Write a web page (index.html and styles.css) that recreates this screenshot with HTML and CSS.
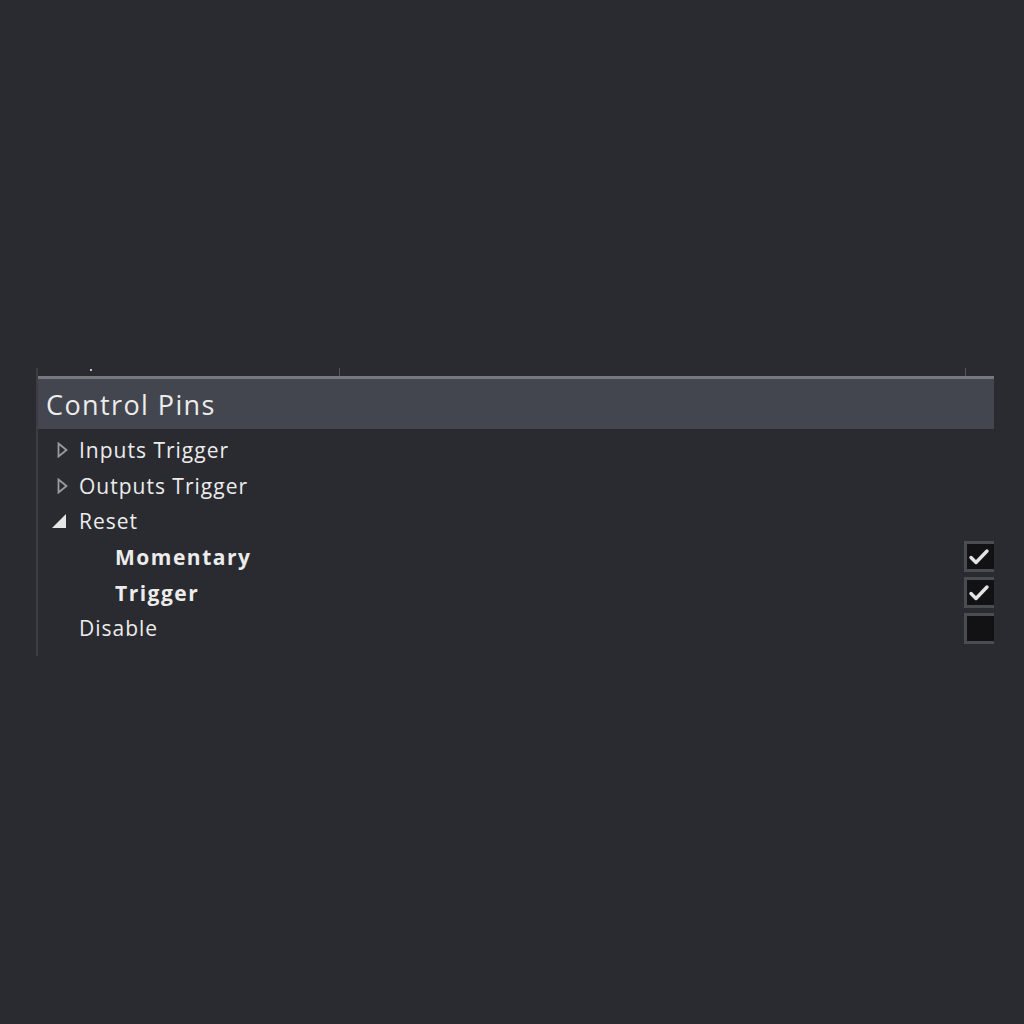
FILE: index.html
```html
<!DOCTYPE html>
<html>
<head>
<meta charset="utf-8">
<link rel="stylesheet" href="styles.css">
</head>
<body>
<div class="panel">
  <div class="ruler">
    <span class="tick dot" style="left:52px"></span>
    <span class="tick" style="left:301px"></span>
    <span class="tick" style="left:927px"></span>
  </div>
  <div class="topline"></div>
  <div class="header">Control Pins</div>
  <div class="rows">
    <div class="row">
      <span class="exp"><svg width="12" height="16" viewBox="0 0 12 16"><path d="M1.5 1.5 L9.5 8 L1.5 14.5 Z" fill="none" stroke="#9a9ca0" stroke-width="1.8" stroke-linejoin="miter"/></svg></span>
      <span class="label">Inputs Trigger</span>
    </div>
    <div class="row">
      <span class="exp"><svg width="12" height="16" viewBox="0 0 12 16"><path d="M1.5 1.5 L9.5 8 L1.5 14.5 Z" fill="none" stroke="#9a9ca0" stroke-width="1.8" stroke-linejoin="miter"/></svg></span>
      <span class="label">Outputs Trigger</span>
    </div>
    <div class="row">
      <span class="exp open"><svg width="16" height="16" viewBox="0 0 16 16"><path d="M14 1 L14 15 L0 15 Z" fill="#e6e6e6"/></svg></span>
      <span class="label">Reset</span>
    </div>
    <div class="row sub">
      <span class="label bold">Momentary</span>
      <span class="check"><svg width="27" height="24" viewBox="0 0 27 24"><path d="M4 12.5 L9 17.5 L20 6" fill="none" stroke="#e4e4e4" stroke-width="3.4" stroke-linecap="round" stroke-linejoin="round"/></svg></span>
    </div>
    <div class="row sub">
      <span class="label bold">Trigger</span>
      <span class="check"><svg width="27" height="24" viewBox="0 0 27 24"><path d="M4 12.5 L9 17.5 L20 6" fill="none" stroke="#e4e4e4" stroke-width="3.4" stroke-linecap="round" stroke-linejoin="round"/></svg></span>
    </div>
    <div class="row plain">
      <span class="label">Disable</span>
      <span class="check"></span>
    </div>
  </div>
</div>
</body>
</html>
```

FILE: styles.css
```css
html, body {
  margin: 0;
  padding: 0;
  background: #2a2b30;
  height: 1024px;
  overflow: hidden;
}
body {
  font-family: "Open Sans", "Noto Sans", sans-serif;
  color: #ececec;
}
.panel {
  margin: 368px 0 0 36px;
  width: 958px;
  height: 288px;
  border-left: 2px solid #3b3d43;
  box-sizing: border-box;
  overflow: hidden;
}
.ruler {
  position: relative;
  height: 8px;
}
.tick {
  position: absolute;
  top: 0;
  width: 1px;
  height: 8px;
  background: #55575c;
}
.tick.dot {
  top: 1px;
  width: 2px;
  height: 2px;
  background: #c0c0d8;
}
.topline {
  height: 3px;
  background: #76787d;
}
.header {
  height: 50px;
  background: #43464e;
  font-size: 27px;
  line-height: 52px;
  padding-left: 8px;
  color: #ececec;
  letter-spacing: 1.4px;
  font-weight: 500;
}
.rows {
  padding-top: 3px;
}
.row {
  height: 35.7px;
  display: flex;
  align-items: center;
  padding-left: 19px;
  font-size: 21px;
  font-weight: 500;
}
.row.sub {
  padding-left: 77px;
}
.row.plain {
  padding-left: 41px;
}
.exp {
  width: 22px;
  display: flex;
  align-items: center;
}
.exp.open {
  width: 27px;
  margin-left: -5px;
}
.label {
  flex: 1;
  white-space: nowrap;
  letter-spacing: 1px;
}
.label.bold {
  font-weight: 700;
  letter-spacing: 1.5px;
}
.check {
  width: 30px;
  height: 31px;
  box-sizing: border-box;
  border: 3px solid #4a4c52;
  border-right: none;
  background: #121214;
  display: flex;
  align-items: center;
}
```
